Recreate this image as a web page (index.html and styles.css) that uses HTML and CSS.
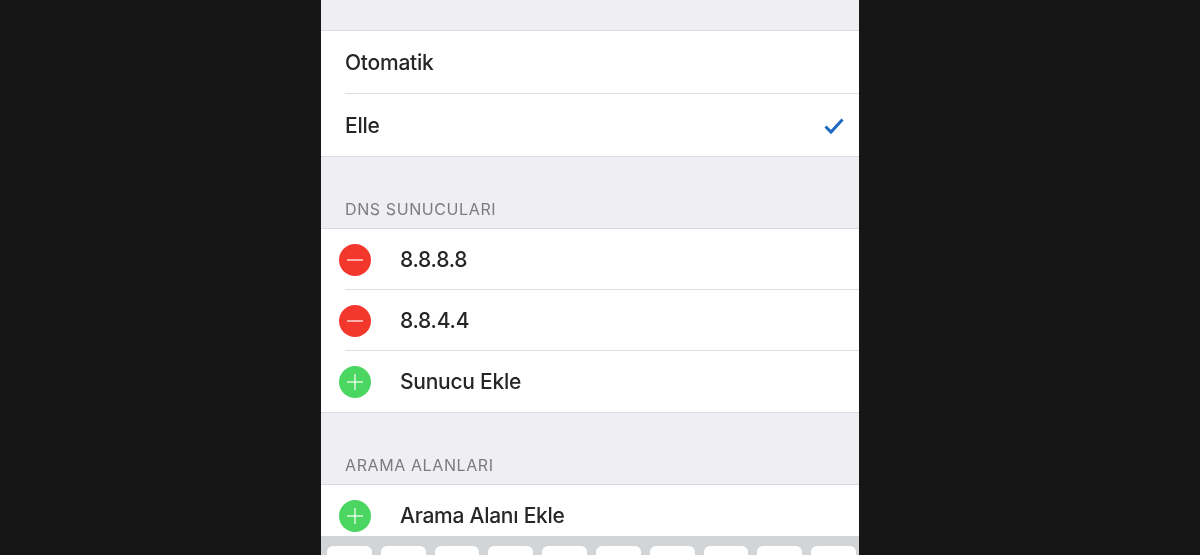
FILE: index.html
```html
<!DOCTYPE html>
<html lang="tr">
<head>
    <meta charset="UTF-8">
    <title>DNS Sunucuları</title>
    <link rel="stylesheet" href="styles.css">
</head>
<body>
    <div class="telefon">
        <div class="bosluk-ust"></div>
        <div class="grup">
            <div class="satir satir-genis">
                <span class="etiket">Otomatik</span>
            </div>
            <div class="satir satir-genis">
                <span class="etiket">Elle</span>
                <svg class="tik" width="22" height="18" viewBox="0 0 22 18">
                    <path d="M2.500 9.500 L8 15 L19.500 2.500" fill="none" stroke="#1c69c4" stroke-width="3"/>
                </svg>
            </div>
        </div>

        <div class="baslik">DNS SUNUCULARI</div>
        <div class="grup">
            <div class="satir">
                <span class="daire kirmizi"><span class="cizgi"></span></span>
                <span class="etiket">8.8.8.8</span>
            </div>
            <div class="satir">
                <span class="daire kirmizi"><span class="cizgi"></span></span>
                <span class="etiket">8.8.4.4</span>
            </div>
            <div class="satir">
                <span class="daire yesil"><span class="cizgi"></span><span class="cizgi dikey"></span></span>
                <span class="etiket">Sunucu Ekle</span>
            </div>
        </div>

        <div class="baslik">ARAMA ALANLARI</div>
        <div class="grup grup-son">
            <div class="satir">
                <span class="daire yesil"><span class="cizgi"></span><span class="cizgi dikey"></span></span>
                <span class="etiket">Arama Alanı Ekle</span>
            </div>
        </div>

        <div class="klavye">
            <div class="tus"></div>
            <div class="tus"></div>
            <div class="tus"></div>
            <div class="tus"></div>
            <div class="tus"></div>
            <div class="tus"></div>
            <div class="tus"></div>
            <div class="tus"></div>
            <div class="tus"></div>
            <div class="tus"></div>
        </div>
    </div>
</body>
</html>
```

FILE: styles.css
```css
html, body {
    margin: 0;
    height: 100%;
    overflow: hidden;
}

body {
    background-color: #161616;
    font-family: Inter, "Liberation Sans", sans-serif;
    color: #262626;
}

.telefon {
    width: 538px;
    height: 555px;
    margin-left: 321px;
    background-color: #eeeef3;
    display: flex;
    flex-direction: column;
    filter: blur(0.6px);
}

.bosluk-ust {
    height: 30px;
    flex-shrink: 0;
}

.grup {
    background-color: white;
    border-top: 1px solid #dcdce0;
    border-bottom: 1px solid #dcdce0;
    flex-shrink: 0;
}

.grup-son {
    border-bottom: none;
    flex: 1;
    min-height: 0;
    overflow: hidden;
}

.satir {
    height: 61px;
    box-sizing: border-box;
    display: flex;
    align-items: center;
    position: relative;
    padding-left: 18px;
    padding-right: 14px;
}

.satir-genis {
    height: 62.500px;
    padding-left: 24px;
}

.satir-genis + .satir-genis {
    padding-top: 2px;
}

.satir + .satir::before {
    content: "";
    position: absolute;
    top: -1px;
    left: 24px;
    right: 0;
    height: 1px;
    background-color: #dededf;
}

.etiket {
    font-size: 21px;
    font-weight: 500;
    letter-spacing: -0.250px;
}

.tik {
    margin-left: auto;
}

.baslik {
    height: 71px;
    flex-shrink: 0;
    box-sizing: border-box;
    padding: 43px 0 0 24px;
    font-size: 16px;
    line-height: 18px;
    letter-spacing: 0.600px;
    color: #7b7b80;
}

.daire {
    width: 32px;
    height: 32px;
    border-radius: 50%;
    margin-right: 29px;
    position: relative;
    flex-shrink: 0;
}

.kirmizi {
    background-color: #f4372c;
}

.yesil {
    background-color: #4bd662;
}

.cizgi {
    position: absolute;
    left: 8px;
    right: 8px;
    top: 15px;
    height: 2px;
    background-color: rgba(255, 255, 255, 0.6);
}

.cizgi.dikey {
    left: 15px;
    right: 15px;
    top: 8px;
    width: 2px;
    height: 16px;
}

.klavye {
    height: 19px;
    flex-shrink: 0;
    background-color: #d2d5d8;
    box-sizing: border-box;
    padding: 10px 3px 0 6px;
    display: flex;
    gap: 9px;
}

.tus {
    flex: 1;
    background-color: white;
    border-radius: 6px 6px 0 0;
}
```
